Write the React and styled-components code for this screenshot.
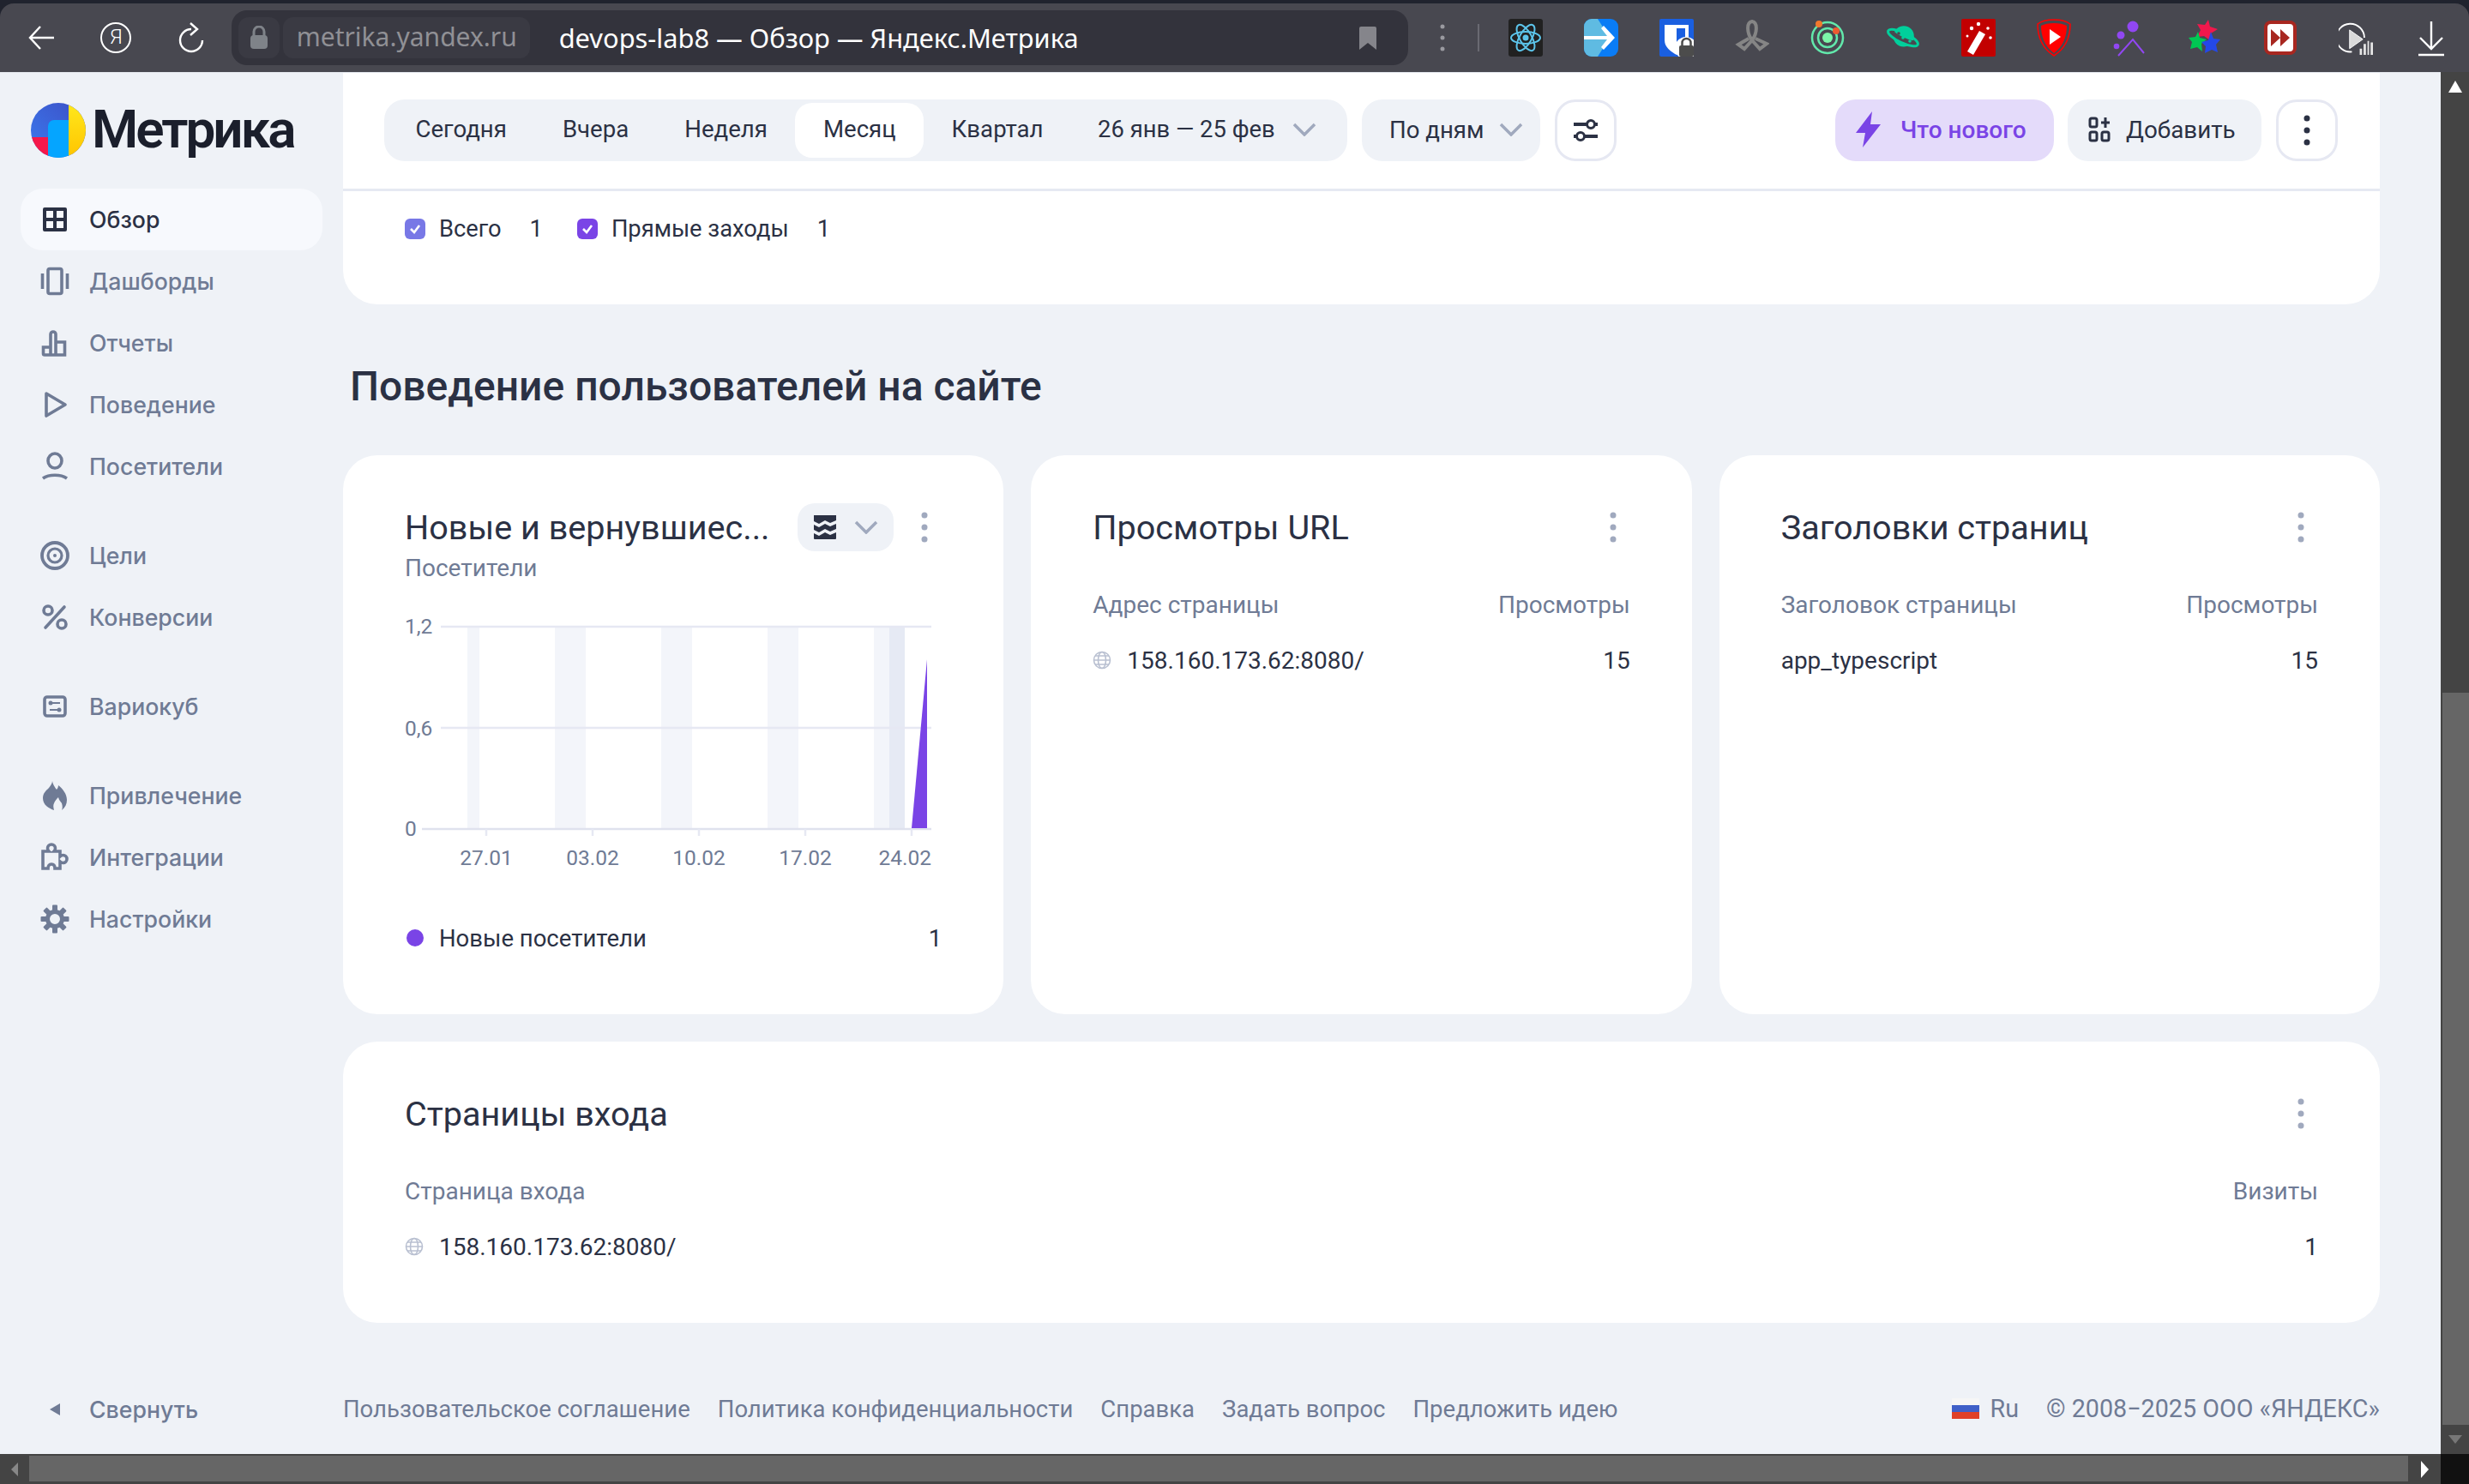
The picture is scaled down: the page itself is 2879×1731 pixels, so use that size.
import React from 'react';
import styled, { createGlobalStyle } from 'styled-components';

const Global = createGlobalStyle`
html, body {
  margin: 0;
  height: 100%;
  overflow: hidden;
  background: #20232e;
}
* { box-sizing: border-box; }
body {
  font-family: Roboto, "Noto Sans", sans-serif;
  color: #2b3144;
}
`

const GRAY = '#6f7b95';
const LIGHT = '#a0a9be';
const DARK = '#2b3144';
const PURPLE = '#7a44e6';

// browser chrome icons
const BackIcon = () => (
    <svg width="30" height="30" viewBox="0 0 30 30" fill="none" stroke="#fff" strokeWidth="2.4">
        <path d="M14 2 2 15l12 13M2 15h28" />
    </svg>
);
const ReloadIcon = () => (
    <svg width="30" height="36" viewBox="0 0 30 36" fill="none" stroke="#fff" strokeWidth="2.4">
        <path d="M15 8A13 13 0 1 0 28 21" />
        <path d="M14 1l8 7-8 7" />
    </svg>
);
const LockIcon = () => (
    <svg width="22" height="28" viewBox="0 0 22 28">
        <path d="M5 12V7a6 6 0 0 1 12 0v5" fill="none" stroke="#7f8389" strokeWidth="3" />
        <rect x="1" y="11" width="20" height="16" rx="4" fill="#7f8389" />
    </svg>
);
const BookmarkIcon = () => (
    <svg width="22" height="28" viewBox="0 0 22 28">
        <path d="M1 3a2 2 0 0 1 2-2h16a2 2 0 0 1 2 2v25l-10-8-10 8z" fill="#85858b" />
    </svg>
);
const ChromeDots = () => (
    <svg width="6" height="34" viewBox="0 0 6 34" fill="#9a9aa0">
        <circle cx="3" cy="4" r="2.5" /><circle cx="3" cy="17" r="2.5" /><circle cx="3" cy="30" r="2.5" />
    </svg>
);

const extensions = [
    <svg viewBox="0 0 40 44" key="react">
        <rect width="40" height="44" rx="3" fill="#212121" />
        <g fill="none" stroke="#5cc4ea" strokeWidth="2">
            <ellipse cx="20" cy="22" rx="17" ry="7" />
            <ellipse cx="20" cy="22" rx="17" ry="7" transform="rotate(60 20 22)" />
            <ellipse cx="20" cy="22" rx="17" ry="7" transform="rotate(120 20 22)" />
        </g>
        <circle cx="20" cy="22" r="3.5" fill="#5cc4ea" />
    </svg>,
    <svg viewBox="0 0 40 44" key="arrow">
        <rect width="40" height="44" rx="9" fill="#0a7cf5" />
        <path d="M9 0a9 9 0 0 0-9 9v26a9 9 0 0 0 9 9h7l14-22L16 0z" fill="#5fbbe2" />
        <path d="M0 20h27l-7-9 3-3 13 14-13 14-3-3 7-9H0z" fill="#fff" />
    </svg>,
    <svg viewBox="0 0 40 44" key="keeper">
        <rect width="40" height="44" rx="2" fill="#1a5fe0" />
        <path d="M6 7h28v18c0 8-7 13-14 17C13 38 6 33 6 25z" fill="#fff" />
        <path d="M20 11h10v15c0 4-4 8-10 11z" fill="#1a5fe0" />
        <circle cx="31" cy="34" r="13" fill="#fff" />
        <rect x="23" y="31" width="17" height="13" rx="2" fill="#4c4c4c" />
        <path d="M26.500 31v-3a5 5 0 0 1 10 0v3" fill="none" stroke="#4c4c4c" strokeWidth="2.500" />
    </svg>,
    <svg viewBox="0 0 40 44" key="ribbon">
        <path d="M20 25C14 17 13 4 20 3c7 1 6 14 0 22zm0 0L11 35l-7-5 12-7M20 25l9 10 8-6-13-6" fill="none" stroke="#858585" strokeWidth="4" />
    </svg>,
    <svg viewBox="0 0 40 44" key="target">
        <circle cx="20" cy="22" r="18" fill="none" stroke="#62e8ab" strokeWidth="2.500" />
        <circle cx="20" cy="22" r="11" fill="none" stroke="#62e8ab" strokeWidth="2.500" />
        <circle cx="20" cy="22" r="6" fill="#7cf5a8" />
        <circle cx="30" cy="14" r="4" fill="#ee5a30" />
        <circle cx="10" cy="6" r="4" fill="#f2782c" />
    </svg>,
    <svg viewBox="0 0 40 44" key="planet">
        <g transform="rotate(25 20 22)">
            <ellipse cx="20" cy="22" rx="19" ry="6" fill="none" stroke="#00cf9b" strokeWidth="3" />
            <path d="M8 20a12 12 0 0 1 24 0c-5 2-19 2-24 0zM10 27c6 1.500 14 1.500 20 0a12 12 0 0 1-20 0z" fill="#00cf9b" />
        </g>
        <circle cx="15" cy="17" r="1.800" fill="#484850" />
        <circle cx="20" cy="22" r="1.800" fill="#00cf9b" />
        <circle cx="28" cy="26" r="1.800" fill="#00cf9b" />
    </svg>,
    <svg viewBox="0 0 40 44" key="wand">
        <rect width="40" height="44" rx="2" fill="#c20000" />
        <path d="M21 14l7 4L14 42l-7-4z" fill="#fff" />
        <g fill="#fff"><circle cx="12" cy="11" r="2.200" /><circle cx="20" cy="6" r="2.200" /><circle cx="31" cy="11" r="1.800" /><circle cx="34" cy="22" r="1.800" /><circle cx="7" cy="20" r="1.500" /></g>
    </svg>,
    <svg viewBox="0 0 40 44" key="shield">
        <path d="M20 1c7 0 14 1 19 5 0 14-5 28-19 37C6 34 1 20 1 6c5-4 12-5 19-5z" fill="none" stroke="#ff0000" strokeWidth="1.500" />
        <path d="M20 5c6 0 11 1 15 3 0 12-4 24-15 32C9 32 5 20 5 8c4-2 9-3 15-3z" fill="#ff0000" />
        <path d="M15 12l13 9-13 9z" fill="#fff" />
    </svg>,
    <svg viewBox="0 0 40 44" key="person">
        <g fill="#9147f2"><circle cx="24" cy="9" r="6.500" /><circle cx="10" cy="19" r="4.500" /><circle cx="5" cy="32" r="3.300" /></g>
        <path d="M7 43 24 24l13 16" fill="none" stroke="#9147f2" strokeWidth="2" />
    </svg>,
    <svg viewBox="0 0 40 44" key="stars">
        <path d="M24 1l2 8 9 3-8 5-1 8-7-5-8 1 4-8-4-7 9 1z" fill="#f0184c" />
        <path d="M12 15l2 7 8 2-6 5 1 9-6-5-8 2 2-8-4-5 8-1z" fill="#00c853" />
        <path d="M27 15l3 8 8 1-5 6 2 9-7-3-8 4 1-8-5-5 8-2z" fill="#2448e8" />
    </svg>,
    <svg viewBox="0 0 40 44" key="ff">
        <rect x="1" y="2" width="38" height="40" rx="8" fill="#a82720" />
        <rect x="5" y="6" width="30" height="32" rx="4" fill="#fff" />
        <path d="M9 12l11 10-11 10zM20 12l11 10-11 10z" fill="#a82720" />
    </svg>,
    <svg viewBox="0 0 44 44" key="playbars">
        <path d="M33 22a18 18 0 1 0-16 18" fill="none" stroke="#fff" strokeWidth="2" />
        <path d="M14 12l17 12-17 12z" fill="#d9d9d9" stroke="#fff" />
        <path d="M27 44V36h3v8zM32 44V30h3v14zM37 44V26h2v18zM41 44V28h3v16z" fill="#e6e6e6" />
    </svg>,
    <svg viewBox="0 0 40 44" key="download">
        <path d="M20 3v32M7 22l13 13 13-13M5 42h30" fill="none" stroke="#fff" strokeWidth="2.400" />
    </svg>,
];

// sidebar icons
const NavSvg = ({ children }) => <svg width="36" height="36" viewBox="0 0 36 36" fill="none" stroke="currentColor" strokeWidth="3.6">{children}</svg>;

const navGroups = [
    [
        { label: 'Обзор', active: true, icon: <NavSvg><path fill="currentColor" stroke="none" fillRule="evenodd" d="M6 4h24a2 2 0 0 1 2 2v24a2 2 0 0 1-2 2H6a2 2 0 0 1-2-2V6a2 2 0 0 1 2-2zm2 4v8h8V8zm12 0v8h8V8zM8 20v8h8v-8zm12 0v8h8v-8z" /></NavSvg> },
        { label: 'Дашборды', icon: <NavSvg><rect x="10" y="3.500" width="16" height="29" rx="2" /><path d="M3.500 9v18M32.500 9v18" /></NavSvg> },
        { label: 'Отчеты', icon: <NavSvg><path d="M6 32a1.500 1.500 0 0 1-1.500-1.500V23H13m0 9H6m7 0V8a3 3 0 0 1 6 0v24m-6 0h6m0-15h10.500v15H19" /></NavSvg> },
        { label: 'Поведение', icon: <NavSvg><path d="M8 5l22 13L8 31z" strokeLinejoin="round" /></NavSvg> },
        { label: 'Посетители', icon: <NavSvg><ellipse cx="18" cy="11.500" rx="8" ry="8.500" /><path d="M4 32c7-5 21-5 28 0" /></NavSvg> },
    ],
    [
        { label: 'Цели', icon: <NavSvg><circle cx="18" cy="18" r="15" strokeWidth="3.800" /><circle cx="18" cy="18" r="8" strokeWidth="3.200" /><circle cx="18" cy="18" r="2" fill="currentColor" stroke="none" /></NavSvg> },
        { label: 'Конверсии', icon: <NavSvg><circle cx="10" cy="10" r="5" /><circle cx="26" cy="26" r="5" /><path d="M29 6 7 30" strokeLinecap="round" /></NavSvg> },
    ],
    [
        { label: 'Вариокуб', icon: <NavSvg><rect x="6" y="7" width="24" height="22" rx="3" /><path d="M12 14h12M12 22h12" strokeWidth="2" /><circle cx="13" cy="14" r="2.500" fill="currentColor" stroke="none" /><circle cx="23" cy="22" r="2.500" fill="currentColor" stroke="none" /></NavSvg> },
    ],
    [
        { label: 'Привлечение', icon: <NavSvg><path fill="currentColor" stroke="none" d="M15 1c1 5 3 7 5 10 1-1 2-3 2-5 5 4 10 10 10 17 0 5-2 9-6 12 1-2 1-5 0-8-1-2-3-3-4-7-2 2-4 4-5 7-1 2-1 4 0 8-6-2-13-6-13-14 0-6 4-9 7-12 2-3 4-5 4-8z" /></NavSvg> },
        { label: 'Интеграции', icon: <NavSvg><path d="M4 11h7c-1-1-1.500-2-1.500-3.500C9.500 5 11.500 3 14 3s4.500 2 4.500 4.500c0 1.500-.500 2.500-1.500 3.500h7v6c1-1 2-1.500 3.500-1.500 2.500 0 4.500 2 4.500 4.500s-2 4.500-4.500 4.500c-1.500 0-2.500-.500-3.500-1.500v8h-6c0-3-1.500-5-4-5s-4 2-4 5H4z" /></NavSvg> },
        { label: 'Настройки', icon: <NavSvg><circle cx="18" cy="18" r="8.500" strokeWidth="5" /><g fill="currentColor" stroke="none">{[0, 45, 90, 135, 180, 225, 270, 315].map(a => <rect key={a} x="15" y="1.500" width="6" height="7" rx="1" transform={`rotate(${a} 18 18)`} />)}</g></NavSvg> },
    ],
];

const periods = ['Сегодня', 'Вчера', 'Неделя', 'Месяц', 'Квартал'];
const footerLinks = ['Пользовательское соглашение', 'Политика конфиденциальности', 'Справка', 'Задать вопрос', 'Предложить идею'];

const Chevron = () => (
    <svg width="28" height="16" viewBox="0 0 28 16" fill="none" stroke={LIGHT} strokeWidth="3.500">
        <path d="M2 2l12 12L26 2" />
    </svg>
);
const Kebab = ({ dark }) => (
    <svg width="8" height="36" viewBox="0 0 8 36" fill={dark ? DARK : LIGHT}>
        <circle cx="4" cy="4" r="3.500" /><circle cx="4" cy="18" r="3.500" /><circle cx="4" cy="32" r="3.500" />
    </svg>
);
const Globe = () => (
    <svg width="22" height="22" viewBox="0 0 22 22" fill="none" stroke="#b9c0d1" strokeWidth="1.600">
        <circle cx="11" cy="11" r="9.500" /><ellipse cx="11" cy="11" rx="4.500" ry="9.500" /><path d="M1.500 11h19M3 6h16M3 16h16" />
    </svg>
);
const Check = () => (
    <svg width="14" height="12" viewBox="0 0 14 12" fill="none" stroke="#fff" strokeWidth="2.600">
        <path d="M2 6l4 4 6-8" />
    </svg>
);

const Logo = () => (
    <svg width="64" height="64" viewBox="0 0 64 64">
        <defs>
            <clipPath id="logoClip"><circle cx="32" cy="32" r="32" /></clipPath>
            <linearGradient id="logoBlue" x1="0" y1="1" x2="1" y2="0">
                <stop offset="0" stopColor="#3a7af0" /><stop offset="1" stopColor="#3d4fc4" />
            </linearGradient>
            <linearGradient id="logoYellow" x1="0" y1="0" x2="0" y2="1">
                <stop offset="0" stopColor="#ffe81c" /><stop offset="1" stopColor="#ffc400" />
            </linearGradient>
        </defs>
        <g clipPath="url(#logoClip)">
            <rect width="64" height="64" fill="url(#logoBlue)" />
            <rect x="0" y="40" width="22" height="24" fill="#f5184a" />
            <path d="M20 64V27a7 7 0 0 1 7-7h17v44z" fill="#05a5ff" />
            <rect x="44" width="20" height="64" fill="url(#logoYellow)" />
        </g>
    </svg>
);

const chartShades = [[545, 559], [647, 683], [771, 807], [895, 931], [1019, 1055]];
const chartTicks = [[567, '27.01'], [691, '03.02'], [815, '10.02'], [939, '17.02']];

const VisitorsChart = () => (
    <ChartSvg viewBox="472 715 626 300">
        {chartShades.map(([a, b]) => <rect key={a} x={a} y="732" width={b - a} height="236" fill="#f3f5fa" />)}
        <rect x="1037" y="732" width="18" height="236" fill="#e6eaf4" />
        <g stroke="#e6e8f3" strokeWidth="2.500">
            <path d="M514 732H1086M514 850H1086" />
            <path d="M492 968H1086" stroke="#dfe2ee" />
            {chartTicks.map(([x]) => <path key={x} d={`M${x} 968v8`} />)}
            <path d="M1063 968v8" />
        </g>
        <path d="M1063 967L1081 770V967z" fill={PURPLE} />
        <g fill={GRAY} fontSize="24.5" fontFamily="Roboto">
            <text x="472" y="740">1,2</text>
            <text x="472" y="859">0,6</text>
            <text x="472" y="976">0</text>
            {chartTicks.map(([x, l]) => <text key={x} x={x} y="1010" textAnchor="middle">{l}</text>)}
            <text x="1086" y="1010" textAnchor="end">24.02</text>
        </g>
    </ChartSvg>
);

const TableCard = ({ title, column, value, rowValue, rowIcon, rowText }) => (
    <Card>
        <CardHead>
            <CardTitle>{title}</CardTitle>
            <KebabBox><Kebab /></KebabBox>
        </CardHead>
        <TableHead><span>{column}</span><span>{value}</span></TableHead>
        <TableRow>
            <RowName>{rowIcon && <Globe />}{rowText}</RowName>
            <span>{rowValue}</span>
        </TableRow>
    </Card>
);

const App = () => {
    return (
        <Shell>
            <Global />
            <Toolbar>
                <ChromeBtn><BackIcon /></ChromeBtn>
                <YaBtn>Я</YaBtn>
                <ChromeBtn><ReloadIcon /></ChromeBtn>
                <AddressBar>
                    <LockChip><LockIcon /></LockChip>
                    <DomainChip>metrika.yandex.ru</DomainChip>
                    <PageTitle>devops-lab8 — Обзор — Яндекс.Метрика</PageTitle>
                    <BookmarkIcon />
                </AddressBar>
                <MenuDots><ChromeDots /></MenuDots>
                <Divider />
                <Extensions>
                    {extensions.map((icon, i) => <Extension key={i}>{icon}</Extension>)}
                </Extensions>
            </Toolbar>

            <Viewport>
                <Page>
                    <Sidebar>
                        <LogoRow>
                            <Logo />
                            <LogoText>Метрика</LogoText>
                        </LogoRow>
                        {navGroups.map((group, i) => (
                            <NavGroup key={i}>
                                {group.map(item => (
                                    <NavItem key={item.label} $active={item.active}>
                                        <NavIcon>{item.icon}</NavIcon>
                                        {item.label}
                                    </NavItem>
                                ))}
                            </NavGroup>
                        ))}
                        <Collapse>
                            <CollapseArrow />
                            Свернуть
                        </Collapse>
                    </Sidebar>

                    <Main>
                        <TopCard>
                            <Filters>
                                <Segments>
                                    {periods.map(p => <Segment key={p} $active={p === 'Месяц'}>{p}</Segment>)}
                                    <DateRange>26 янв — 25 фев <Chevron /></DateRange>
                                </Segments>
                                <GroupBtn>По дням <Chevron /></GroupBtn>
                                <SquareBtn>
                                    <svg width="32" height="32" viewBox="0 0 32 32" fill="none" stroke={DARK} strokeWidth="4">
                                        <path d="M2 9h16M26 9h4M2 23h4M14 23h16" />
                                        <circle cx="22" cy="9" r="4.500" strokeWidth="3" />
                                        <circle cx="10" cy="23" r="4.500" strokeWidth="3" />
                                    </svg>
                                </SquareBtn>
                                <Spacer />
                                <NewsBtn>
                                    <svg width="30" height="42" viewBox="0 0 30 42" fill={PURPLE}>
                                        <path d="M19 0 0 25h11L8 42l21-27H17z" />
                                    </svg>
                                    Что нового
                                </NewsBtn>
                                <AddBtn>
                                    <svg width="26" height="30" viewBox="0 0 26 30" fill="none" stroke={DARK} strokeWidth="3">
                                        <rect x="2" y="2" width="8" height="10" rx="2" />
                                        <rect x="2" y="18" width="8" height="10" rx="2" />
                                        <rect x="16" y="18" width="8" height="10" rx="2" />
                                        <path d="M20 1v12M15 7h10" />
                                    </svg>
                                    Добавить
                                </AddBtn>
                                <SquareBtn><Kebab dark /></SquareBtn>
                            </Filters>
                            <Metrics>
                                <Metric>
                                    <CheckBox $color="#7878e6"><Check /></CheckBox>
                                    <MetricName>Всего</MetricName>
                                    1
                                </Metric>
                                <Metric>
                                    <CheckBox $color={PURPLE}><Check /></CheckBox>
                                    <MetricName>Прямые заходы</MetricName>
                                    1
                                </Metric>
                            </Metrics>
                        </TopCard>

                        <SectionTitle>Поведение пользователей на сайте</SectionTitle>

                        <CardRow>
                            <Card>
                                <CardHead>
                                    <CardTitle>Новые и вернувшиес...</CardTitle>
                                    <ChartToggle>
                                        <svg width="28" height="28" viewBox="0 0 28 28">
                                            <path fill={DARK} d="M1 0h26v6l-7 3-6-3-7 4-6-3zM1 11l6 3 7-4 6 3 7-3v6l-7 3-6-3-7 4-6-3zM1 21l6 3 7-4 6 3 7-3v7a1 1 0 0 1-1 1H2a1 1 0 0 1-1-1z" />
                                        </svg>
                                        <Chevron />
                                    </ChartToggle>
                                    <KebabBox><Kebab /></KebabBox>
                                </CardHead>
                                <CardSub>Посетители</CardSub>
                                <VisitorsChart />
                                <Legend>
                                    <LegendDot />
                                    Новые посетители
                                    <LegendValue>1</LegendValue>
                                </Legend>
                            </Card>
                            <TableCard title="Просмотры URL" column="Адрес страницы" value="Просмотры" rowIcon rowText="158.160.173.62:8080/" rowValue="15" />
                            <TableCard title="Заголовки страниц" column="Заголовок страницы" value="Просмотры" rowText="app_typescript" rowValue="15" />
                        </CardRow>

                        <WideCard>
                            <TableCard title="Страницы входа" column="Страница входа" value="Визиты" rowIcon rowText="158.160.173.62:8080/" rowValue="1" />
                        </WideCard>

                        <Footer>
                            {footerLinks.map(l => <FooterLink key={l}>{l}</FooterLink>)}
                            <Spacer />
                            <Lang><Flag />Ru</Lang>
                            <span>© 2008−2025 ООО «ЯНДЕКС»</span>
                        </Footer>
                    </Main>
                </Page>

                <VScroll>
                    <ArrowBox><ArrowUp /></ArrowBox>
                    <VThumb />
                    <ArrowBox><ArrowDown /></ArrowBox>
                </VScroll>
            </Viewport>

            <HScroll>
                <HArrow><ArrowLeft /></HArrow>
                <HThumb />
                <HArrow $wide><ArrowRight /></HArrow>
                <Corner />
            </HScroll>
        </Shell>
    )
}

// Styled components
const Shell = styled.div`
width: 2879px;
height: 1731px;
display: flex;
flex-direction: column;
padding-top: 4px;
`

const Toolbar = styled.div`
height: 80px;
flex: none;
display: flex;
align-items: center;
background: #484850;
border-radius: 16px 16px 0 0;
`
const ChromeBtn = styled.div`
width: 88px;
display: flex;
justify-content: center;
&:first-child { width: 96px; }
`
const YaBtn = styled.div`
width: 36px;
height: 36px;
margin: 0 26px 0 22px;
border: 2.5px solid #fff;
border-radius: 50%;
color: #fff;
font-size: 24px;
font-weight: 300;
line-height: 30px;
text-align: center;
`
const AddressBar = styled.div`
width: 1380px;
height: 64px;
margin-left: 3px;
padding: 8px 36px 8px 8px;
display: flex;
align-items: center;
gap: 4px;
background: #33333c;
border-radius: 18px;
`
const LockChip = styled.div`
width: 48px;
height: 48px;
display: flex;
align-items: center;
justify-content: center;
background: #3a3a43;
border-radius: 12px;
`
const DomainChip = styled.div`
width: 288px;
height: 48px;
padding-left: 16px;
background: #3a3a43;
border-radius: 12px;
color: #909095;
font-family: "Noto Sans", sans-serif;
font-size: 30px;
line-height: 46px;
`
const PageTitle = styled.div`
flex: 1;
padding-left: 30px;
color: #fff;
font-family: "Noto Sans", sans-serif;
font-size: 30.8px;
`
const MenuDots = styled.div`
width: 82px;
display: flex;
justify-content: center;
`
const Divider = styled.div`
width: 2px;
height: 32px;
background: #6a6a72;
`
const Extensions = styled.div`
display: flex;
margin-left: 10px;
`
const Extension = styled.div`
width: 88px;
display: flex;
justify-content: center;
svg { width: 40px; height: 44px; }
`

const Viewport = styled.div`
flex: 1;
min-height: 0;
display: flex;
`
const Page = styled.div`
flex: 1;
display: flex;
background: #eff2f7;
border-top: 1px solid #e2e5ec;
`

const Sidebar = styled.nav`
width: 400px;
flex: none;
display: flex;
flex-direction: column;
padding: 35px 24px 16px;
`
const LogoRow = styled.div`
height: 64px;
display: flex;
align-items: center;
gap: 7px;
margin: 0 0 36px 12px;
`
const LogoText = styled.div`
margin-bottom: 3px;
font-size: 62px;
line-height: 58px;
font-weight: 600;
letter-spacing: -3px;
color: #1b1f2c;
`
const NavGroup = styled.div`
margin-bottom: 32px;
`
const NavItem = styled.div`
height: 72px;
display: flex;
align-items: center;
padding-left: 22px;
border-radius: 26px;
font-family: Inter, sans-serif;
font-size: 26.7px;
font-weight: 500;
color: ${p => (p.$active ? DARK : GRAY)};
background: ${p => (p.$active ? '#f7f9fd' : 'transparent')};
`
const NavIcon = styled.div`
width: 36px;
height: 36px;
margin-right: 22px;
`
const Collapse = styled.div`
height: 72px;
margin-top: auto;
display: flex;
align-items: center;
padding-left: 80px;
position: relative;
font-family: Inter, sans-serif;
font-size: 26.7px;
font-weight: 500;
color: ${GRAY};
`
const CollapseArrow = styled.span`
position: absolute;
left: 34px;
top: 29px;
border: 7px solid transparent;
border-right: 12px solid ${GRAY};
border-left: 0;
`

const Main = styled.main`
flex: 1;
min-width: 0;
display: flex;
flex-direction: column;
padding-right: 71px;
`
const TopCard = styled.section`
background: #fff;
border-radius: 0 0 40px 40px;
padding-bottom: 72px;
`
const Filters = styled.div`
height: 138px;
display: flex;
align-items: flex-start;
gap: 17px;
padding: 31px 49px 0 48px;
border-bottom: 3px solid #e6e9f2;
`
const Segments = styled.div`
width: 1123px;
height: 72px;
flex: none;
padding: 4px;
display: flex;
background: #eff2f7;
border-radius: 24px;
`
const Segment = styled.div`
height: 64px;
padding: 0 32.5px;
border-radius: 20px;
font-size: 27.6px;
line-height: 62px;
background: ${p => (p.$active ? '#fff' : 'transparent')};
`
const DateRange = styled.div`
height: 64px;
padding: 0 0 2px 31px;
display: flex;
align-items: center;
gap: 20px;
font-size: 27.4px;
white-space: nowrap;
`
const GroupBtn = styled.div`
width: 208px;
height: 72px;
display: flex;
align-items: center;
gap: 18px;
padding: 0 0 2px 32px;
background: #eff2f7;
border-radius: 24px;
font-size: 27.6px;
white-space: nowrap;
`
const SquareBtn = styled.div`
width: 72px;
height: 72px;
display: flex;
align-items: center;
justify-content: center;
border: 3px solid #e6e8f2;
border-radius: 24px;
background: #fff;
`
const Spacer = styled.div`
flex: 1;
`
const NewsBtn = styled.div`
width: 255px;
height: 72px;
margin-right: -1px;
display: flex;
align-items: center;
gap: 22px;
padding: 0 0 2px 24px;
background: #e4dbfa;
border-radius: 24px;
color: ${PURPLE};
font-size: 28px;
font-weight: 500;
`
const AddBtn = styled.div`
width: 226px;
height: 72px;
display: flex;
align-items: center;
gap: 18px;
padding: 0 0 2px 24px;
background: #eff2f7;
border-radius: 24px;
font-size: 27.8px;
`
const Metrics = styled.div`
display: flex;
gap: 40px;
padding: 28px 0 0 72px;
`
const Metric = styled.div`
height: 32px;
display: flex;
align-items: center;
font-size: 27.3px;
`
const CheckBox = styled.span`
width: 24px;
height: 24px;
display: flex;
align-items: center;
justify-content: center;
border-radius: 6px;
background: ${p => p.$color};
`
const MetricName = styled.span`
margin: 0 33px 0 16px;
`

const SectionTitle = styled.h2`
margin: 66px 0 50px 8px;
height: 60px;
font-size: 48px;
line-height: 60px;
font-weight: 500;
color: ${DARK};
`
const CardRow = styled.div`
display: grid;
grid-template-columns: repeat(3, 1fr);
gap: 32px;
height: 652px;
`
const Card = styled.article`
background: #fff;
border-radius: 40px;
padding: 56px 72px 71px;
`
const WideCard = styled.div`
margin-top: 32px;
`
const CardHead = styled.div`
height: 56px;
display: flex;
align-items: center;
`
const CardTitle = styled.h3`
flex: 1;
margin: 0;
font-size: 39.6px;
font-weight: 400;
color: ${DARK};
white-space: nowrap;
`
const KebabBox = styled.div`
width: 40px;
height: 56px;
display: flex;
align-items: center;
justify-content: center;
`
const ChartToggle = styled.div`
width: 112px;
height: 56px;
margin-right: 16px;
display: flex;
align-items: center;
gap: 20px;
padding-left: 18px;
background: #eff2f7;
border-radius: 20px;
`
const CardSub = styled.div`
height: 36px;
margin-top: 2px;
font-size: 28px;
line-height: 36px;
color: ${GRAY};
`
const ChartSvg = styled.svg`
display: block;
width: 626px;
height: 300px;
margin-top: 33px;
`
const Legend = styled.div`
height: 36px;
margin-top: 62px;
display: flex;
align-items: center;
font-size: 27.5px;
`
const LegendDot = styled.span`
width: 20px;
height: 20px;
margin: 0 18px 0 2px;
border-radius: 50%;
background: ${PURPLE};
`
const LegendValue = styled.span`
margin-left: auto;
`
const TableHead = styled.div`
height: 36px;
margin-top: 45px;
display: flex;
justify-content: space-between;
font-size: 28px;
line-height: 36px;
color: ${GRAY};
`
const TableRow = styled.div`
height: 36px;
margin-top: 28px;
display: flex;
justify-content: space-between;
align-items: center;
font-size: 28px;
`
const RowName = styled.span`
display: flex;
align-items: center;
gap: 18px;
`

const Footer = styled.footer`
height: 40px;
margin-top: 80px;
display: flex;
align-items: center;
gap: 32px;
font-size: 28.7px;
color: ${GRAY};
`
const FooterLink = styled.span`
font-size: 27.5px;
`
const Lang = styled.span`
display: flex;
align-items: center;
gap: 13px;
`
const Flag = styled.span`
width: 32px;
height: 24px;
background: linear-gradient(#f6f6f6 33%, #4060c8 33% 66%, #e04028 66%);
`

const VScroll = styled.div`
width: 33px;
flex: none;
display: flex;
flex-direction: column;
background: #444;
`
const ArrowBox = styled.div`
height: 34px;
display: flex;
align-items: center;
justify-content: center;
`
const VThumb = styled.div`
height: 854px;
margin-top: auto;
margin-left: 2px;
background: #666;
`
const ArrowUp = styled.span`
border: 8px solid transparent;
border-top: 0;
border-bottom: 14px solid #fff;
`
const ArrowDown = styled.span`
border: 8px solid transparent;
border-bottom: 0;
border-top: 10px solid #777;
`
const HScroll = styled.div`
height: 35px;
flex: none;
display: flex;
background: #444;
`
const HArrow = styled.div`
width: ${p => (p.$wide ? 38 : 34)}px;
display: flex;
align-items: center;
justify-content: center;
`
const HThumb = styled.div`
flex: 1;
margin: 2px 0 3px;
background: #666;
`
const ArrowLeft = styled.span`
border: 8px solid transparent;
border-left: 0;
border-right: 8px solid #888;
`
const ArrowRight = styled.span`
border: 10px solid transparent;
border-right: 0;
border-left: 9px solid #fff;
`
const Corner = styled.div`
width: 33px;
background: #111;
`

export default App;
